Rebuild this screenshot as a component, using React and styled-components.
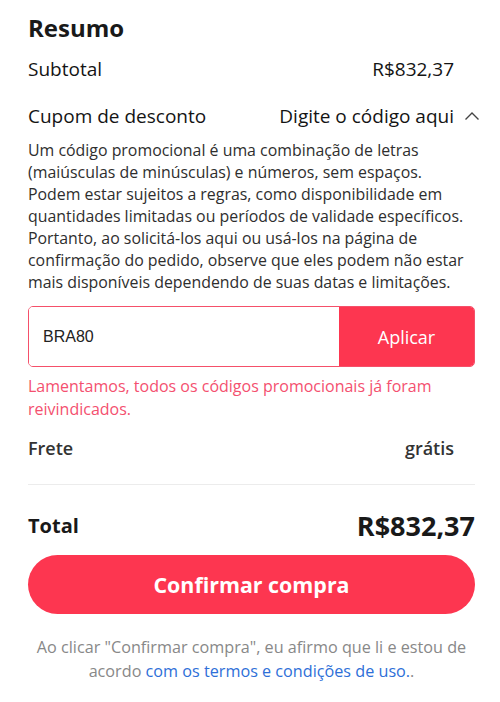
import React from "react";
import styled, { createGlobalStyle } from "styled-components";

const Global = createGlobalStyle`
  html, body { margin: 0; padding: 0; background: #fff; }
  body { font-family: "Open Sans", "Noto Sans", sans-serif; color: #222; }
  * { box-sizing: border-box; }
`;

const Panel = styled.div`
  width: 500px;
  padding: 12px 25px 0 28px;
  display: flex;
  flex-direction: column;
`;

const Title = styled.h2`
  margin: 0;
  font-size: 24px;
  font-weight: 700;
  line-height: 32px;
  color: #191919;
`;

const Row = styled.div`
  display: flex;
  justify-content: space-between;
  align-items: center;
  padding-right: ${(p) => p.$pr || 0}px;
  margin-right: ${(p) => p.$mr || 0}px;
  margin-top: ${(p) => p.$mt || 0}px;
  font-size: ${(p) => p.$size || 16}px;
  font-weight: ${(p) => p.$weight || 400};
  line-height: ${(p) => p.$lh || 26}px;
  color: ${(p) => p.$color || "#141414"};
`;

const Cell = styled.span`
  font-weight: ${(p) => (p.$bold ? 700 : "inherit")};
  font-size: ${(p) => p.$size || "inherit"};
  display: flex;
  align-items: center;
  gap: 10px;
`;

const Desc = styled.p`
  margin: 10px 0 0;
  font-size: 15.9px;
  line-height: 22px;
  color: #2e2e2e;
`;

const Coupon = styled.div`
  margin-top: 13px;
  height: 61px;
  display: flex;
  border: 1px solid #f5506a;
  border-radius: 5px;
  overflow: hidden;
`;

const CodeInput = styled.input`
  flex: 1;
  min-width: 0;
  border: none;
  outline: none;
  padding: 0 14px;
  font-family: "Liberation Sans", Arial, sans-serif;
  font-size: 16px;
  color: #222;
  background: #fff;
`;

const ApplyButton = styled.button`
  width: 135px;
  border: none;
  background: #fd3650;
  color: #fff;
  font-family: "Open Sans", sans-serif;
  font-size: 18px;
  cursor: pointer;
`;

const ErrorText = styled.p`
  margin: 8px 0 0;
  font-size: 16px;
  line-height: 23px;
  color: #f4506f;
`;

const Divider = styled.hr`
  border: none;
  border-top: 1px solid #ececec;
  margin: 23px 0 0;
`;

const ConfirmButton = styled.button`
  margin-top: 11px;
  height: 59px;
  border: none;
  border-radius: 30px;
  background: #fd3650;
  color: #fff;
  font-family: "Open Sans", sans-serif;
  font-size: 21.4px;
  font-weight: 700;
  cursor: pointer;
`;

const Footer = styled.p`
  margin: 21px 0 0;
  text-align: center;
  font-size: 16.2px;
  line-height: 24px;
  color: #888;
`;

const Link = styled.a`
  color: #2e6fd8;
  text-decoration: none;
`;

const Chevron = () => (
  <svg width="16" height="10" viewBox="0 0 16 10" fill="none">
    <path d="M1.5 8.5L8 2L14.5 8.5" stroke="#444" strokeWidth="1.4" />
  </svg>
);

export default function App() {
  return (
    <>
      <Global />
      <Panel>
        <Title>Resumo</Title>
        <Row $mt={12} $pr={21} $size={19} $weight={500}>
          <Cell>Subtotal</Cell>
          <Cell>R$832,37</Cell>
        </Row>
        <Row $mt={21} $mr={-5} $size={19} $weight={500}>
          <Cell>Cupom de desconto</Cell>
          <Cell>
            Digite o código aqui <Chevron />
          </Cell>
        </Row>
        <Desc>
          Um código promocional é uma combinação de letras (maiúsculas de minúsculas) e números, sem espaços.
          Podem estar sujeitos a regras, como disponibilidade em quantidades limitadas ou períodos de validade
          específicos. Portanto, ao solicitá-los aqui ou usá-los na página de confirmação do pedido, observe que
          eles podem não estar mais disponíveis dependendo de suas datas e limitações.
        </Desc>
        <Coupon>
          <CodeInput defaultValue="BRA80" />
          <ApplyButton>Aplicar</ApplyButton>
        </Coupon>
        <ErrorText>Lamentamos, todos os códigos promocionais já foram reivindicados.</ErrorText>
        <Row $mt={14} $pr={21} $size={18} $weight={600} $color="#333">
          <Cell>Frete</Cell>
          <Cell>grátis</Cell>
        </Row>
        <Divider />
        <Row $mt={23} $lh={36} $weight={700} $color="#191919">
          <Cell $size="20px">Total</Cell>
          <Cell $size="27px">R$832,37</Cell>
        </Row>
        <ConfirmButton>Confirmar compra</ConfirmButton>
        <Footer>
          Ao clicar "Confirmar compra", eu afirmo que li e estou de acordo{" "}
          <Link href="#">com os termos e condições de uso.</Link>.
        </Footer>
      </Panel>
    </>
  );
}
